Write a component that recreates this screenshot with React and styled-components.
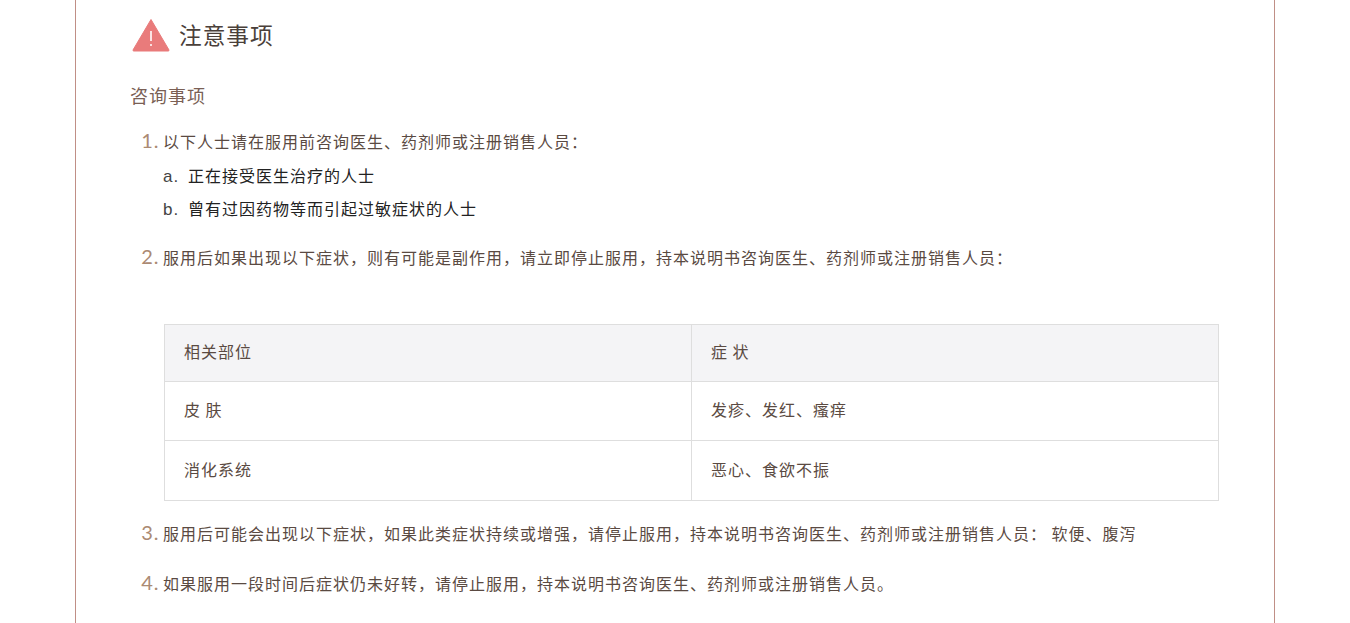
import React from 'react';
import styled, {createGlobalStyle} from 'styled-components';

const GlobalStyle = createGlobalStyle`
    html, body {
        margin: 0;
        padding: 0;
        background: #fff;
        height: 623px;
        overflow: hidden;
    }
    body {
        font-family: "Noto Sans CJK SC", "Liberation Sans", sans-serif;
    }
`

const Panel = styled.section`
    box-sizing: border-box;
    width: 1200px;
    height: 623px;
    margin: 0 auto;
    padding: 17px 55px 0 54px;
    border-left: 1px solid #c08f86;
    border-right: 1px solid #c08f86;
    overflow: hidden;
    letter-spacing: 1px;
    color: #5a4a42;
`

const Heading = styled.h2`
    display: flex;
    align-items: center;
    gap: 9px;
    height: 36px;
    margin: 0 0 0 2px;
    font-size: 22.7px;
    font-weight: 400;
    line-height: 36px;
    color: #4a403a;
`

const SubHeading = styled.h3`
    margin: 23px 0 0;
    font-size: 18px;
    font-weight: 400;
    line-height: 38px;
    color: #7a5f55;
`

const Steps = styled.ol`
    margin: 10px 0 0;
    padding: 0 0 0 33px;
    font-size: 16px;
`

const Step = styled.li`
    line-height: 33px;
    margin-bottom: ${props => props.$gap ?? 16}px;

    &::marker {
        content: counter(list-item) ".\\2009";
        font-family: "Lato", sans-serif;
        font-size: 20px;
        color: #ab8a73;
    }
`

const SubSteps = styled.ol`
    list-style: lower-alpha;
    margin: 0;
    padding: 1px 0 0 25px;
    color: #222;

    li::marker {
        content: counter(list-item, lower-alpha) ".\\2009\\2009";
        color: #444;
        font-size: 17px;
        font-family: "Liberation Sans", sans-serif;
    }
`

const Table = styled.table`
    width: 1055px;
    margin: 50px 0 15px 1px;
    border-collapse: collapse;
    table-layout: fixed;
`

const HeadCell = styled.th`
    height: 53px;
    padding: 0 19px 3px;
    border: 1px solid #dedede;
    background: #f4f4f6;
    font-weight: 400;
    text-align: left;
    color: #5a4a42;
`

const Cell = styled.td`
    height: 55px;
    padding: 0 19px 3px;
    border: 1px solid #dedede;
    color: #5a4a42;

    tr:last-child & {
        height: 56px;
    }
`

const WarningIcon = () => (
    <svg width="38" height="34" viewBox="0 0 38 34">
        <path d="M19 1.5 L37 32 a0.8 0.8 0 0 1 -0.7 1 H1.7 a0.8 0.8 0 0 1 -0.7 -1 Z" fill="#e97b7b" stroke="#e97b7b" strokeLinejoin="round" strokeWidth="1"/>
        <path d="M19 13 V23" stroke="#fff" strokeWidth="1.6"/>
        <circle cx="19" cy="27" r="1" fill="#fff"/>
    </svg>
)

const rows = [
    {part: '皮 肤', symptom: '发疹、发红、瘙痒'},
    {part: '消化系统', symptom: '恶心、食欲不振'}
];

export default function App() {
    return (
        <>
            <GlobalStyle/>
            <Panel>
                <Heading><WarningIcon/>注意事项</Heading>
                <SubHeading>咨询事项</SubHeading>
                <Steps>
                    <Step $gap={15}>
                        以下人士请在服用前咨询医生、药剂师或注册销售人员：
                        <SubSteps>
                            <li>正在接受医生治疗的人士</li>
                            <li>曾有过因药物等而引起过敏症状的人士</li>
                        </SubSteps>
                    </Step>
                    <Step $gap={0}>
                        服用后如果出现以下症状，则有可能是副作用，请立即停止服用，持本说明书咨询医生、药剂师或注册销售人员：
                        <Table>
                            <thead>
                                <tr>
                                    <HeadCell>相关部位</HeadCell>
                                    <HeadCell>症 状</HeadCell>
                                </tr>
                            </thead>
                            <tbody>
                                {rows.map(({part, symptom}) => (
                                    <tr key={part}>
                                        <Cell>{part}</Cell>
                                        <Cell>{symptom}</Cell>
                                    </tr>
                                ))}
                            </tbody>
                        </Table>
                    </Step>
                    <Step>服用后可能会出现以下症状，如果此类症状持续或增强，请停止服用，持本说明书咨询医生、药剂师或注册销售人员： 软便、腹泻</Step>
                    <Step>如果服用一段时间后症状仍未好转，请停止服用，持本说明书咨询医生、药剂师或注册销售人员。</Step>
                </Steps>
            </Panel>
        </>
    );
}
